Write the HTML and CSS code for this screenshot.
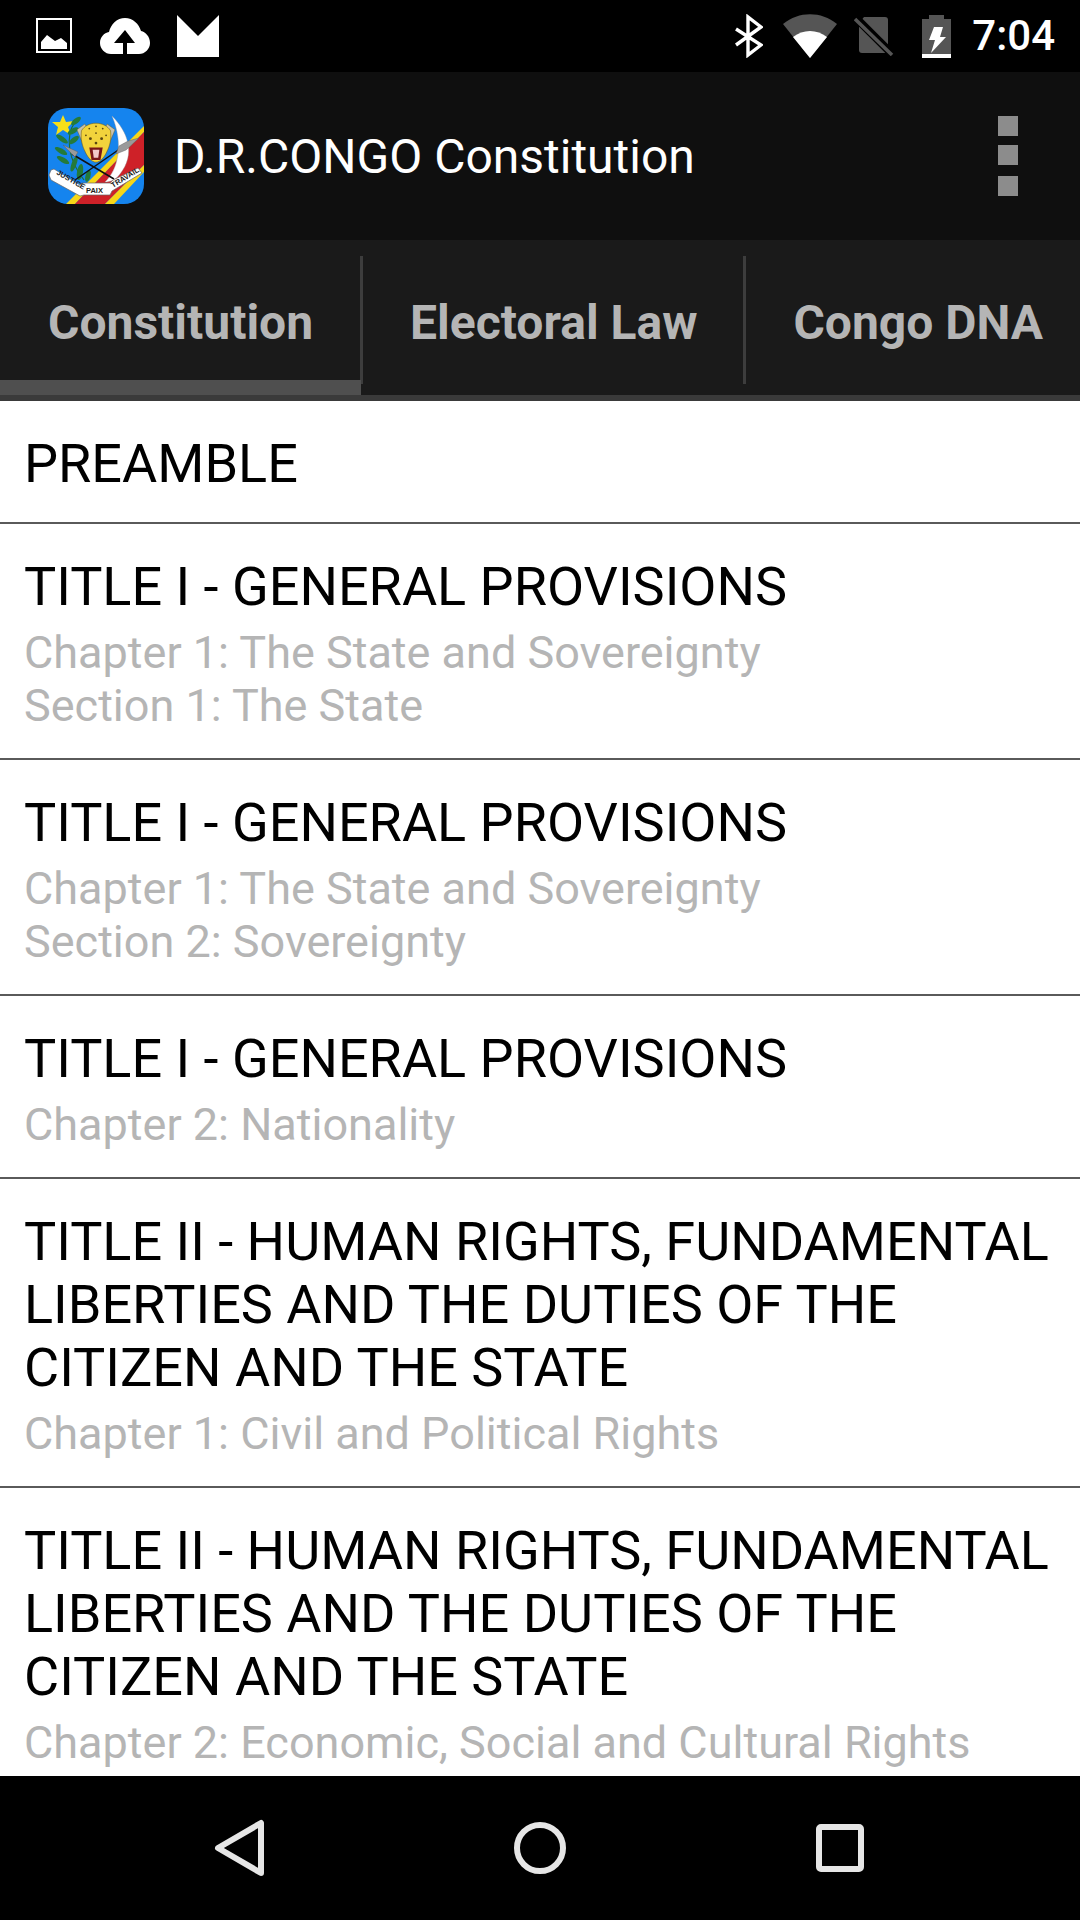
FILE: index.html
```html
<!DOCTYPE html>
<html lang="en">
<head>
<meta charset="utf-8">
<title>D.R.CONGO Constitution</title>
<link rel="stylesheet" href="styles.css">
</head>
<body>
<div class="phone">
  <header class="status">
    <div class="status-group left">
      <svg class="ic-img" viewBox="0 0 36 36"><rect x="1" y="1" width="34" height="33" fill="none" stroke="#fff" stroke-width="2"/><path fill="#fff" d="M5 31V24L11 17 19 23 25 20 31 25V31z"/></svg>
      <svg class="ic-cloud" viewBox="0 0 50 36"><path fill="#fff" d="M11 36C5 36 0 31 0 25 0 19 4 15 9 14 11 6 17 0 25 0 33 0 39 6 41 13 46 14 50 19 50 25 50 31 45 36 39 36H27V25H35L25 12 14 25H23V36z"/></svg>
      <svg class="ic-m" viewBox="0 0 44 42"><path fill="#fff" d="M1 0 22 21 43 0V42H1z"/></svg>
    </div>
    <div class="status-group right">
      <svg class="ic-bt" viewBox="0 0 28 44"><path fill="none" stroke="#fff" stroke-width="3.4" d="M1 15 26 31 13 41V3L26 13 1 31"/></svg>
      <svg class="ic-wifi" viewBox="0 0 54 44"><path fill="#555" d="M0 10C16-3 38-3 54 10L27 44z"/><path fill="#fff" d="M10 23C20 15 34 15 44 23L27 44z"/></svg>
      <svg class="ic-sim" viewBox="0 0 40 40"><path fill="#555" d="M10 1H31q3 0 3 3V34q0 3-3 3H8q-3 0-3-3V7z"/><path stroke="#000" stroke-width="8" d="M1 1 39 39"/><path stroke="#555" stroke-width="3.5" d="M1 3 38 39"/></svg>
      <svg class="ic-bat" viewBox="0 0 29 43"><path fill="#555" d="M7 0H22V4H29V39H0V4H7z"/><path fill="#fff" d="M0 39H29V43H0zM12 12H21L18 22H24L9 38 13 25H7z"/></svg>
      <span class="clock">7:04</span>
    </div>
  </header>

  <section class="appbar">
    <svg class="logo" viewBox="0 0 96 96">
      <defs><clipPath id="logoclip"><rect width="96" height="96" rx="20"/></clipPath></defs>
      <g clip-path="url(#logoclip)">
        <rect width="96" height="96" fill="#1584ee"/>
        <path fill="#f7d618" d="M96 18V24L27 96H18z"/>
        <path fill="#ce2128" d="M96 24V57L57 96H27z"/>
        <path fill="#f7d618" d="M96 57V64L66 96H57z"/>
        <path fill="#fff" stroke="#999" stroke-width=".4" d="M64 8C80 24 88 46 72 66 68 72 62 74 57 74 70 62 76 36 64 8z"/>
        <path fill="#f7e018" d="M15 7 18 14 26 13 20 19 23 27 15 22 8 27 10 19 4 14 12 14z"/>
        <path fill="none" stroke="#1f6e33" stroke-width="1.2" d="M27 14C17 28 20 52 36 72"/>
        <g fill="#247a3a">
          <ellipse cx="28" cy="13" rx="6" ry="2.5" transform="rotate(-40 28 13)"/>
          <ellipse cx="25" cy="23" rx="6" ry="2.5" transform="rotate(-30 25 23)"/>
          <ellipse cx="14" cy="31" rx="7" ry="2.5" transform="rotate(35 14 31)"/>
          <ellipse cx="26" cy="32" rx="6" ry="2.5" transform="rotate(-40 26 32)"/>
          <ellipse cx="13" cy="43" rx="7" ry="2.5" transform="rotate(30 13 43)"/>
          <ellipse cx="15" cy="52" rx="7" ry="2.5" transform="rotate(30 15 52)"/>
          <ellipse cx="26" cy="56" rx="8" ry="2.5" transform="rotate(-70 26 56)"/>
          <ellipse cx="32" cy="64" rx="8" ry="3" transform="rotate(-80 32 64)"/>
          <ellipse cx="40" cy="68" rx="6" ry="2.5" transform="rotate(-75 40 68)"/>
        </g>
        <g transform="translate(48 34) scale(1.12) translate(-48 -34)">
          <path fill="#c9c3ae" stroke="#6b5a1a" stroke-width=".4" d="M31 23 38 18 41 23 36 35zM65 23 58 18 55 23 60 35z"/>
          <path fill="#f2d33c" stroke="#6b5a1a" stroke-width=".5" d="M35 24C40 15 56 15 61 24 62 32 60 38 58 42 56 47 52 52 48 52 44 52 40 47 38 42 36 38 34 32 35 24z"/>
          <g fill="#5a4610"><circle cx="42" cy="22" r=".8"/><circle cx="54" cy="22" r=".8"/><circle cx="48" cy="20" r=".8"/><circle cx="39" cy="28" r=".8"/><circle cx="57" cy="28" r=".8"/><circle cx="48" cy="26" r=".8"/><circle cx="43" cy="31" r="1.3"/><circle cx="53" cy="31" r="1.3"/><circle cx="48" cy="35" r="1.2"/></g>
          <path fill="#7a1616" d="M42 39H54L52 50H44z"/>
          <path fill="#f2c9c9" d="M45 41H51L50 48H46z"/>
        </g>
        <path stroke="#111" stroke-width="1.5" d="M24 46 66 71M27 72 76 38"/>
        <path fill="#9a9a9a" stroke="#555" stroke-width=".4" d="M15 37 30 44 27 49zM91 30 78 42 68 46 71 38 80 33z"/>
        <path fill="#fff" stroke="#666" stroke-width=".7" d="M3 62 6 61 32 77 34 75H62L65 72 90 60 94 65 64 83 62 87H36L32 88 3 72 1 67z"/>
        <text class="motto" transform="translate(8 66) rotate(30)">JUSTICE</text>
        <text class="motto" x="38" y="84.5">PAIX</text>
        <text class="motto" transform="translate(65 80) rotate(-32)">TRAVAIL</text>
      </g>
    </svg>
    <h1 class="app-title">D.R.CONGO Constitution</h1>
    <svg class="overflow" viewBox="0 0 20 80"><path fill="#8c8c8c" d="M0 0H20V20H0zM0 29H20V49H0zM0 60H20V80H0z"/></svg>
  </section>

  <nav class="tabs">
    <div class="tab active">Constitution</div>
    <div class="tab">Electoral Law</div>
    <div class="tab">Congo DNA</div>
  </nav>

  <main class="list">
    <article class="row"><div class="title">PREAMBLE</div></article>
    <article class="row">
      <div class="title">TITLE I - GENERAL PROVISIONS</div>
      <div class="sub">Chapter 1: The State and Sovereignty<br>Section 1: The State</div>
    </article>
    <article class="row">
      <div class="title">TITLE I - GENERAL PROVISIONS</div>
      <div class="sub">Chapter 1: The State and Sovereignty<br>Section 2: Sovereignty</div>
    </article>
    <article class="row">
      <div class="title">TITLE I - GENERAL PROVISIONS</div>
      <div class="sub">Chapter 2: Nationality</div>
    </article>
    <article class="row">
      <div class="title">TITLE II - HUMAN RIGHTS, FUNDAMENTAL LIBERTIES AND THE DUTIES OF THE CITIZEN AND THE STATE</div>
      <div class="sub">Chapter 1: Civil and Political Rights</div>
    </article>
    <article class="row">
      <div class="title">TITLE II - HUMAN RIGHTS, FUNDAMENTAL LIBERTIES AND THE DUTIES OF THE CITIZEN AND THE STATE</div>
      <div class="sub">Chapter 2: Economic, Social and Cultural Rights</div>
    </article>
  </main>

  <footer class="navbar">
    <svg class="nav-ic" viewBox="0 0 56 60"><path fill="none" stroke="#e6e6e6" stroke-width="6" stroke-linejoin="round" d="M6 30 49 5V55z"/></svg>
    <svg class="nav-ic" viewBox="0 0 56 60"><circle cx="28" cy="30" r="23" fill="none" stroke="#e6e6e6" stroke-width="6"/></svg>
    <svg class="nav-ic" viewBox="0 0 56 60"><rect x="7" y="9" width="42" height="42" rx="2" fill="none" stroke="#e6e6e6" stroke-width="6"/></svg>
  </footer>
</div>
</body>
</html>
```

FILE: styles.css
```css
* { box-sizing: border-box; }
html, body { margin: 0; padding: 0; }
body { background: #000; font-family: Roboto, "Liberation Sans", sans-serif; }

.phone { width: 1080px; height: 1920px; display: flex; flex-direction: column; overflow: hidden; background: #fff; }

.status { height: 72px; flex: none; background: #000; display: flex; justify-content: space-between; align-items: center; padding: 0 25px 0 36px; }
.status-group { display: flex; align-items: center; }
.status-group svg { display: block; flex: none; }
.left { gap: 26px; }
.ic-img { width: 36px; height: 36px; }
.ic-cloud { width: 50px; height: 36px; margin-left: 2px; }
.ic-m { width: 44px; height: 42px; }
.ic-bt { width: 28px; height: 44px; }
.ic-wifi { width: 54px; height: 44px; margin-left: 20px; }
.ic-sim { width: 40px; height: 40px; margin-left: 17px; }
.ic-bat { width: 29px; height: 43px; margin-left: 28px; }
.clock { color: #fff; font-size: 42px; font-weight: 500; line-height: 44px; margin-left: 21px; }

.appbar { height: 168px; flex: none; background: #0f0f0f; display: flex; align-items: center; padding: 0 62px 0 48px; }
.logo { width: 96px; height: 96px; flex: none; display: block; }
.motto { font: 700 7.5px "Liberation Sans", sans-serif; fill: #222; }
.app-title { margin: 2px 0 0 30px; flex: 1; color: #fff; font-size: 48px; font-weight: 400; line-height: 56px; }
.overflow { width: 20px; height: 80px; flex: none; display: block; }

.tabs { height: 161px; flex: none; background: #1a1a1a; display: flex; overflow: hidden; border-bottom: 6px solid #3a3a3a; }
.tab { flex: none; padding: 6px 46px 0 47px; color: #b5b5b5; font-size: 48px; font-weight: 700; line-height: 56px; display: flex; align-items: center; height: 128px; margin-top: 16px; border-right: 3px solid #3d3d3d; }
.tab:last-child { border-right: 0; }
.tab.active { position: relative; padding-left: 48px; padding-right: 47px; }
.tab.active::after { content: ""; position: absolute; left: 0; right: -1px; top: 124px; height: 21px; background: linear-gradient(#4f4f4f 15px, #666 15px); }

.list { flex: 1; min-height: 0; overflow: hidden; background: #fff; }
.row { padding: 31px 24px 27px; border-bottom: 2px solid #5a5a5a; }
.row:last-child { border-bottom: 0; }
.title { color: #000; font-size: 54px; line-height: 63px; }
.sub { color: #b5b5b5; font-size: 45px; line-height: 53px; margin-top: 8px; margin-bottom: -1px; }

.navbar { height: 144px; flex: none; background: #000; display: flex; justify-content: space-between; padding: 0 212px; align-items: center; }
.nav-ic { width: 56px; height: 60px; display: block; }
```
